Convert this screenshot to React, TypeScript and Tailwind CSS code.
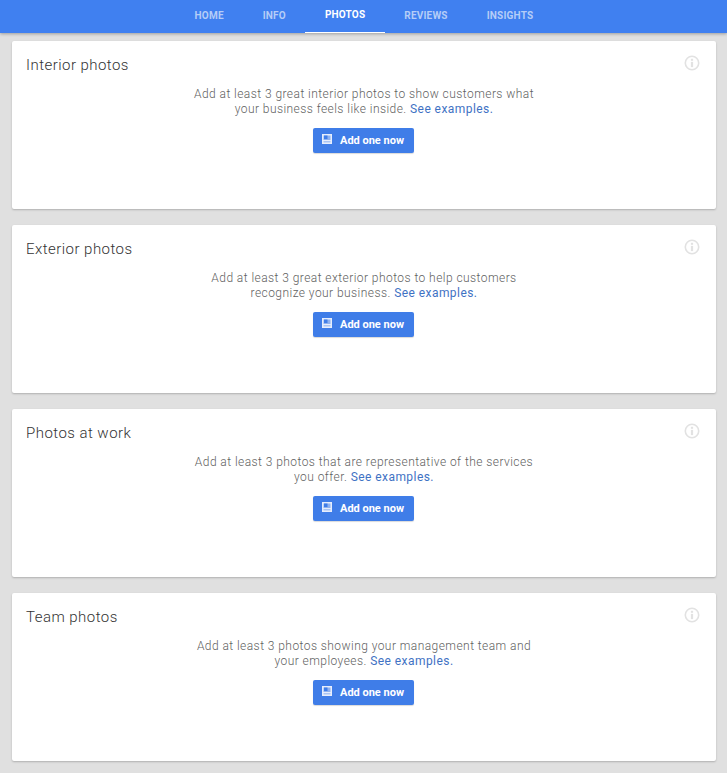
import React from "react";

const tabs = ["HOME", "INFO", "PHOTOS", "REVIEWS", "INSIGHTS"];

const cards = [
  { title: "Interior photos", lines: ["Add at least 3 great interior photos to show customers what", "your business feels like inside."] },
  { title: "Exterior photos", lines: ["Add at least 3 great exterior photos to help customers", "recognize your business."] },
  { title: "Photos at work", lines: ["Add at least 3 photos that are representative of the services", "you offer."] },
  { title: "Team photos", lines: ["Add at least 3 photos showing your management team and", "your employees."] },
];

const PhotoIcon = () => (
  <svg width="10" height="10" viewBox="0 0 10 10" className="mb-[4px]">
    <path d="M0 0h10v10H0z" fill="#e6edfc" />
    <path d="M1.5 1.5H8.5V6H1.5z" fill="#8fb2f0" />
    <path d="M2 1.5h3.5V5H2z" fill="#3f7de8" />
    <path d="M1.5 7h7v1.5h-7z" fill="#a9c4f4" />
  </svg>
);

const InfoIcon = () => (
  <svg width="16" height="16" viewBox="0 0 16 16" fill="none" className="text-[#e2e2e2]">
    <circle cx="8" cy="8" r="6.7" stroke="currentColor" strokeWidth="1.6" />
    <rect x="6.9" y="3.8" width="2.2" height="2" fill="currentColor" />
    <rect x="6.9" y="6.9" width="2.2" height="5.2" fill="currentColor" />
  </svg>
);

function Card({ title, lines }: { title: string; lines: string[] }) {
  return (
    <section className="relative h-[168px] rounded-[2px] bg-white px-[14px] pt-[14px] shadow-[0_1px_2px_rgba(0,0,0,0.22)]">
      <h2 className="text-[15px] leading-[20px] font-light tracking-[0.46px] text-[#333333]">{title}</h2>
      <div className="absolute top-[14px] right-[16px]">
        <InfoIcon />
      </div>
      <p className="mt-[12px] text-center text-[12px] leading-[15px] font-light tracking-[0.44px] text-[#5f5f5f]">
        {lines[0]}
        <br />
        {lines[1]} <span className="font-normal text-[#3f72c4]">See examples.</span>
      </p>
      <div className="mt-[11px] flex justify-center">
        <button className="mr-[1px] flex h-[25px] w-[101px] items-center justify-center gap-[8px] rounded-[2px] bg-[#3f7de8] pt-[1px] pr-[1px] text-[11px] font-bold text-white shadow-[0_1px_1px_rgba(0,0,0,0.15)]">
          <PhotoIcon />
          Add one now
        </button>
      </div>
    </section>
  );
}

export default function App() {
  return (
    <div className="min-h-[773px] bg-[#e0e0e0] font-['Roboto',sans-serif]">
      <nav className="flex h-[33px] justify-center bg-[#4080f0] pl-[1px] shadow-[0_1px_3px_rgba(0,0,0,0.3)]">
        {tabs.map((tab) => (
          <div
            key={tab}
            className={
              tab === "PHOTOS"
                ? "flex items-center border-b border-white px-[19.5px] pb-[3px] text-[10px] font-bold tracking-[0.2px] text-white"
                : "flex items-center px-[19.5px] pb-[3px] text-[10px] font-bold tracking-[0.2px] text-[#b5cdf7]"
            }
          >
            {tab}
          </div>
        ))}
      </nav>
      <main className="flex flex-col gap-[16px] pt-[8px] pr-[11px] pl-[12px]">
        {cards.map((card) => (
          <Card key={card.title} title={card.title} lines={card.lines} />
        ))}
      </main>
    </div>
  );
}
